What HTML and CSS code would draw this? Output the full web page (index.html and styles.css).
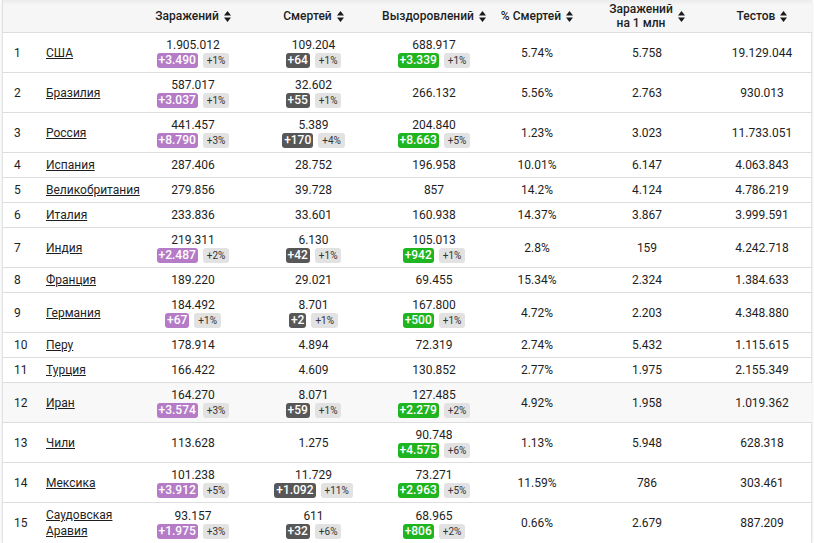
FILE: index.html
```html
<!DOCTYPE html>
<html lang="ru">
<head>
<meta charset="utf-8">
<title>COVID-19</title>
<link rel="stylesheet" href="styles.css">
</head>
<body>
<div class="card">
<table class="stats">
<colgroup>
<col class="c-rank"><col class="c-country"><col class="c-cases"><col class="c-deaths"><col class="c-rec"><col class="c-pct"><col class="c-mln"><col class="c-tests">
</colgroup>
<thead>
<tr>
<th></th>
<th></th>
<th><span class="hd">Заражений <svg class="sort" viewBox="0 0 7 11"><path d="M0 4.6L3.5 0L7 4.6Z M0 6.4L3.5 11L7 6.4Z"/></svg></span></th>
<th><span class="hd">Смертей <svg class="sort" viewBox="0 0 7 11"><path d="M0 4.6L3.5 0L7 4.6Z M0 6.4L3.5 11L7 6.4Z"/></svg></span></th>
<th><span class="hd">Выздоровлений <svg class="sort" viewBox="0 0 7 11"><path d="M0 4.6L3.5 0L7 4.6Z M0 6.4L3.5 11L7 6.4Z"/></svg></span></th>
<th><span class="hd">% Смертей <svg class="sort" viewBox="0 0 7 11"><path d="M0 4.6L3.5 0L7 4.6Z M0 6.4L3.5 11L7 6.4Z"/></svg></span></th>
<th><span class="hd"><span class="two">Заражений<br>на 1 млн</span> <svg class="sort" viewBox="0 0 7 11"><path d="M0 4.6L3.5 0L7 4.6Z M0 6.4L3.5 11L7 6.4Z"/></svg></span></th>
<th><span class="hd">Тестов <svg class="sort" viewBox="0 0 7 11"><path d="M0 4.6L3.5 0L7 4.6Z M0 6.4L3.5 11L7 6.4Z"/></svg></span></th>
</tr>
</thead>
<tbody>
<tr>
<td class="rank">1</td><td class="country"><a href="#">США</a></td>
<td><div class="n">1.905.012</div><div class="bd"><span class="b inf">+3.490</span><span class="p">+1%</span></div></td>
<td><div class="n">109.204</div><div class="bd"><span class="b dth">+64</span><span class="p">+1%</span></div></td>
<td><div class="n">688.917</div><div class="bd"><span class="b rec">+3.339</span><span class="p">+1%</span></div></td>
<td>5.74%</td><td>5.758</td><td>19.129.044</td>
</tr>
<tr>
<td class="rank">2</td><td class="country"><a href="#">Бразилия</a></td>
<td><div class="n">587.017</div><div class="bd"><span class="b inf">+3.037</span><span class="p">+1%</span></div></td>
<td><div class="n">32.602</div><div class="bd"><span class="b dth">+55</span><span class="p">+1%</span></div></td>
<td>266.132</td>
<td>5.56%</td><td>2.763</td><td>930.013</td>
</tr>
<tr>
<td class="rank">3</td><td class="country"><a href="#">Россия</a></td>
<td><div class="n">441.457</div><div class="bd"><span class="b inf">+8.790</span><span class="p">+3%</span></div></td>
<td><div class="n">5.389</div><div class="bd"><span class="b dth">+170</span><span class="p">+4%</span></div></td>
<td><div class="n">204.840</div><div class="bd"><span class="b rec">+8.663</span><span class="p">+5%</span></div></td>
<td>1.23%</td><td>3.023</td><td>11.733.051</td>
</tr>
<tr>
<td class="rank">4</td><td class="country"><a href="#">Испания</a></td>
<td>287.406</td><td>28.752</td><td>196.958</td>
<td>10.01%</td><td>6.147</td><td>4.063.843</td>
</tr>
<tr>
<td class="rank">5</td><td class="country"><a href="#">Великобритания</a></td>
<td>279.856</td><td>39.728</td><td>857</td>
<td>14.2%</td><td>4.124</td><td>4.786.219</td>
</tr>
<tr>
<td class="rank">6</td><td class="country"><a href="#">Италия</a></td>
<td>233.836</td><td>33.601</td><td>160.938</td>
<td>14.37%</td><td>3.867</td><td>3.999.591</td>
</tr>
<tr>
<td class="rank">7</td><td class="country"><a href="#">Индия</a></td>
<td><div class="n">219.311</div><div class="bd"><span class="b inf">+2.487</span><span class="p">+2%</span></div></td>
<td><div class="n">6.130</div><div class="bd"><span class="b dth">+42</span><span class="p">+1%</span></div></td>
<td><div class="n">105.013</div><div class="bd"><span class="b rec">+942</span><span class="p">+1%</span></div></td>
<td>2.8%</td><td>159</td><td>4.242.718</td>
</tr>
<tr>
<td class="rank">8</td><td class="country"><a href="#">Франция</a></td>
<td>189.220</td><td>29.021</td><td>69.455</td>
<td>15.34%</td><td>2.324</td><td>1.384.633</td>
</tr>
<tr>
<td class="rank">9</td><td class="country"><a href="#">Германия</a></td>
<td><div class="n">184.492</div><div class="bd"><span class="b inf">+67</span><span class="p">+1%</span></div></td>
<td><div class="n">8.701</div><div class="bd"><span class="b dth">+2</span><span class="p">+1%</span></div></td>
<td><div class="n">167.800</div><div class="bd"><span class="b rec">+500</span><span class="p">+1%</span></div></td>
<td>4.72%</td><td>2.203</td><td>4.348.880</td>
</tr>
<tr>
<td class="rank">10</td><td class="country"><a href="#">Перу</a></td>
<td>178.914</td><td>4.894</td><td>72.319</td>
<td>2.74%</td><td>5.432</td><td>1.115.615</td>
</tr>
<tr>
<td class="rank">11</td><td class="country"><a href="#">Турция</a></td>
<td>166.422</td><td>4.609</td><td>130.852</td>
<td>2.77%</td><td>1.975</td><td>2.155.349</td>
</tr>
<tr class="hover">
<td class="rank">12</td><td class="country"><a href="#">Иран</a></td>
<td><div class="n">164.270</div><div class="bd"><span class="b inf">+3.574</span><span class="p">+3%</span></div></td>
<td><div class="n">8.071</div><div class="bd"><span class="b dth">+59</span><span class="p">+1%</span></div></td>
<td><div class="n">127.485</div><div class="bd"><span class="b rec">+2.279</span><span class="p">+2%</span></div></td>
<td>4.92%</td><td>1.958</td><td>1.019.362</td>
</tr>
<tr>
<td class="rank">13</td><td class="country"><a href="#">Чили</a></td>
<td>113.628</td><td>1.275</td>
<td><div class="n">90.748</div><div class="bd"><span class="b rec">+4.575</span><span class="p">+6%</span></div></td>
<td>1.13%</td><td>5.948</td><td>628.318</td>
</tr>
<tr>
<td class="rank">14</td><td class="country"><a href="#">Мексика</a></td>
<td><div class="n">101.238</div><div class="bd"><span class="b inf">+3.912</span><span class="p">+5%</span></div></td>
<td><div class="n">11.729</div><div class="bd"><span class="b dth">+1.092</span><span class="p">+11%</span></div></td>
<td><div class="n">73.271</div><div class="bd"><span class="b rec">+2.963</span><span class="p">+5%</span></div></td>
<td>11.59%</td><td>786</td><td>303.461</td>
</tr>
<tr>
<td class="rank">15</td><td class="country country-wrap"><a href="#">Саудовская Аравия</a></td>
<td><div class="n">93.157</div><div class="bd"><span class="b inf">+1.975</span><span class="p">+3%</span></div></td>
<td><div class="n">611</div><div class="bd"><span class="b dth">+32</span><span class="p">+6%</span></div></td>
<td><div class="n">68.965</div><div class="bd"><span class="b rec">+806</span><span class="p">+2%</span></div></td>
<td>0.66%</td><td>2.679</td><td>887.209</td>
</tr>
</tbody>
</table>
</div>
</body>
</html>
```

FILE: styles.css
```css
html, body {
  margin: 0;
  padding: 0;
  background: #ffffff;
}
body {
  font-family: Roboto, "Liberation Sans", Arial, sans-serif;
  font-size: 12px;
  color: #1e1e1e;
  overflow: hidden;
}
.card {
  margin: 0 2px;
  border-left: 1px solid #e2e2e2;
  border-right: 1px solid #e2e2e2;
  box-shadow: 0 0 3px rgba(0, 0, 0, 0.12);
}
.stats {
  width: 100%;
  border-collapse: collapse;
  table-layout: fixed;
}
.c-rank { width: 37px; }
.c-country { width: 95px; }
.c-cases { width: 116px; }
.c-deaths { width: 125px; }
.c-rec { width: 116px; }
.c-pct { width: 90px; }
.c-mln { width: 130px; }
.c-tests { width: 100px; }

.stats th {
  height: 32px;
  padding: 0 2px;
  background: linear-gradient(#ebebeb 0, #f6f6f6 5px, #f6f6f6 100%);
  font-weight: 500;
  font-size: 12px;
  line-height: 14px;
  color: #1e1e1e;
  text-align: center;
  vertical-align: middle;
  border-bottom: 1px solid #dedede;
}
.hd {
  display: inline-flex;
  align-items: center;
  gap: 5px;
}
.two {
  display: inline-block;
  text-align: center;
}
.sort {
  width: 7px;
  height: 11px;
  fill: #1a1a1a;
  flex: none;
}
.stats td {
  padding: 4px 2px;
  line-height: 16px;
  text-align: center;
  vertical-align: middle;
  border-top: 1px solid #dedede;
}
.stats tbody tr:first-child td { border-top: none; }
.stats td.rank {
  text-align: left;
  padding-left: 11px;
}
.stats td.country {
  text-align: left;
  padding-left: 6px;
  padding-right: 0;
}
.country a {
  color: #1e1e1e;
  text-decoration: underline;
  white-space: nowrap;
}
.country-wrap a { white-space: normal; }
.hover td { background: #f8f8f8; }
.n { line-height: 16px; }
.bd {
  display: flex;
  justify-content: center;
  align-items: center;
  gap: 5px;
  height: 15px;
}
.b {
  display: inline-block;
  height: 15px;
  line-height: 15px;
  padding: 0 2px;
  border-radius: 3px;
  color: #fff;
  font-weight: 500;
  font-size: 12px;
}
.inf { background: #b57bc6; }
.dth { background: #575757; }
.rec { background: #1fb520; }
.p {
  display: inline-block;
  height: 15px;
  line-height: 15px;
  padding: 0 4px;
  border-radius: 3px;
  background: #e2e2e2;
  color: #333;
  font-size: 10px;
}
```
